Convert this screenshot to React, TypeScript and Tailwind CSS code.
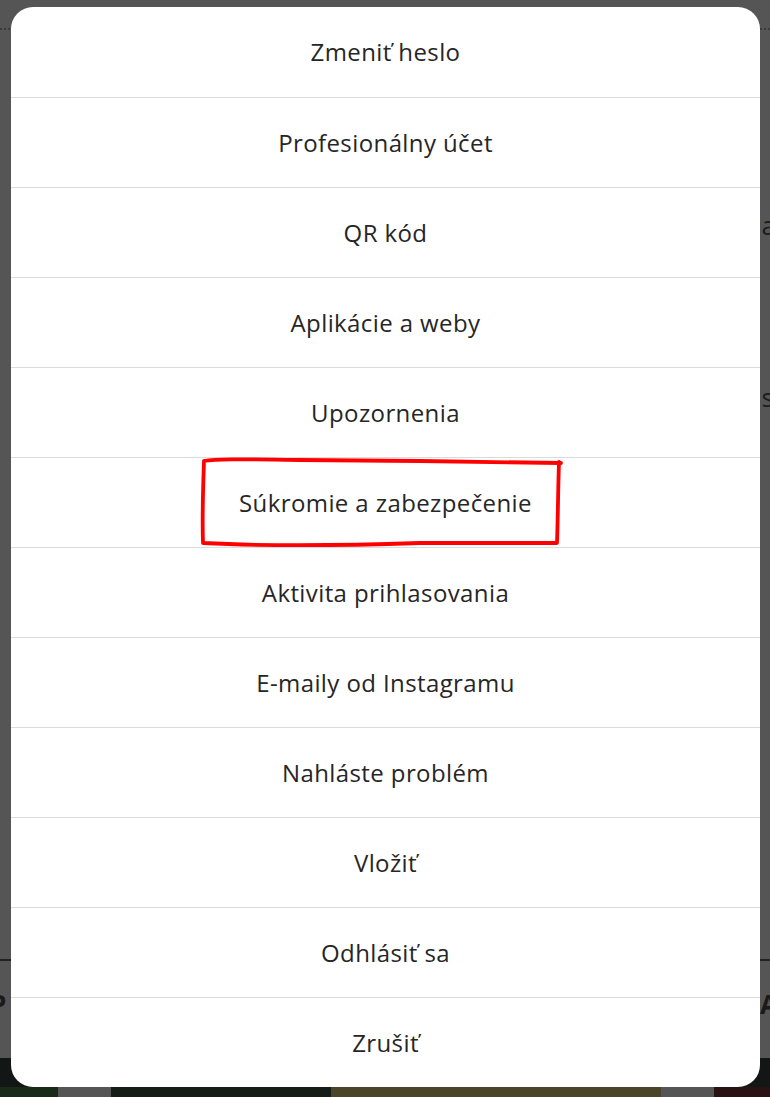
import React from 'react';

const items = [
  'Zmeniť heslo',
  'Profesionálny účet',
  'QR kód',
  'Aplikácie a weby',
  'Upozornenia',
  'Súkromie a zabezpečenie',
  'Aktivita prihlasovania',
  'E-maily od Instagramu',
  'Nahláste problém',
  'Vložiť',
  'Odhlásiť sa',
  'Zrušiť',
];

const Backdrop: React.FC = () => (
  <div className="flex flex-col h-full">
    <div className="h-[28px]" />
    <div className="border-t-2 border-dotted border-[#3c3c3c]" />
    <div className="flex-1 relative">
      <span className="absolute right-[-6px] top-[176px] text-[26px] text-[#1c1c1c]">a</span>
      <span className="absolute right-[-4px] top-[348px] text-[26px] text-[#1c1c1c]">s</span>
    </div>
    <div className="h-[2px] bg-[#222]" />
    <div className="h-[97px] relative">
      <span className="absolute left-[-10px] top-[24px] text-[26px] font-bold text-[#1a1a1a]">P</span>
      <span className="absolute right-[-8px] top-[24px] text-[26px] font-bold text-[#1a1a1a]">A</span>
    </div>
    <div className="h-[29px] bg-[#121614]" />
    <div className="h-[10px] flex">
      <div className="w-[58px] bg-[#1a2a18]" />
      <div className="w-[53px] bg-[#555555]" />
      <div className="w-[220px] bg-[#161c18]" />
      <div className="w-[330px] bg-[#4a4428]" />
      <div className="w-[53px] bg-[#555555]" />
      <div className="flex-1 bg-[#2a1212]" />
    </div>
  </div>
);

// hand-drawn red marker around the highlighted row
const Scribble: React.FC = () => (
  <svg className="absolute inset-0 pointer-events-none" width="770" height="1097" viewBox="0 0 770 1097">
    <path
      d="M204 461 C215 459 235 459 300 460 L420 461 L561 463 M559 462 C558 490 558 515 557 543 L420 543 C330 546 260 546 203 543 C202 515 203 490 204 461"
      fill="none"
      stroke="#ff0000"
      strokeWidth="3.8"
      strokeLinecap="round"
      strokeLinejoin="round"
    />
  </svg>
);

export default function App() {
  return (
    <div className="relative h-[1097px] w-full overflow-hidden bg-[#555555]" style={{ fontFamily: '"Open Sans", "Noto Sans", sans-serif' }}>
      <Backdrop />
      <div className="absolute left-[11px] top-[7px] w-[749px] bg-white rounded-[22px] overflow-hidden">
        {items.map((label, i) => (
          <button
            key={label}
            className={`w-full h-[90px] flex items-center justify-center text-[24px] tracking-[0.4px] text-[#262626] ${i > 0 ? 'border-t border-[#dbdbdb]' : ''}`}
          >
            {label}
          </button>
        ))}
      </div>
      <Scribble />
    </div>
  );
}
